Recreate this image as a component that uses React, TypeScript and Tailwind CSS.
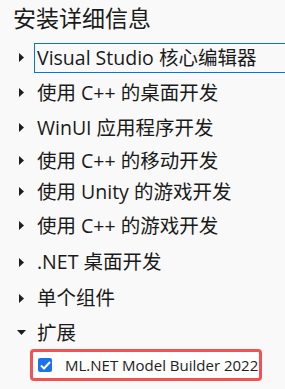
const font = { fontFamily: '"Open Sans", "Noto Sans CJK SC", sans-serif' }

function Caret({ open = false }: { open?: boolean }) {
  return (
    <div className="w-[17px] flex justify-center shrink-0">
      {open ? (
        <svg width="9" height="5" viewBox="0 0 9 5">
          <path d="M0 0 L9 0 L4.5 5 Z" fill="#1e1e1e" />
        </svg>
      ) : (
        <svg width="5" height="9" viewBox="0 0 5 9">
          <path d="M0 0 L5 4.5 L0 9 Z" fill="#1e1e1e" />
        </svg>
      )}
    </div>
  )
}

const rows = [
  { label: "使用 C++ 的桌面开发", h: "h-[35px]" },
  { label: "WinUI 应用程序开发", h: "h-[35px]" },
  { label: "使用 C++ 的移动开发", h: "h-[31px]" },
  { label: "使用 Unity 的游戏开发", h: "h-[31px]" },
  { label: "使用 C++ 的游戏开发", h: "h-[37px]" },
  { label: ".NET 桌面开发", h: "h-[36px]" },
  { label: "单个组件", h: "h-[36px]" },
]

export default function App() {
  return (
    <div className="w-[285px] h-[389px] bg-[#f9f9f9] text-[#1a1a1a] overflow-hidden" style={font}>
      <div className="pl-[13px] pt-[2px] h-[40px] text-[23px] leading-[32px]">安装详细信息</div>

      <div className="pl-[13px] flex flex-col">
        {/* focused row */}
        <div className="flex items-center h-[35px]">
          <Caret />
          <div className="ml-[4px] -mr-[40px] flex-1 h-[30px] border border-[#0078d4] flex items-center pl-[2px] text-[19.5px] whitespace-nowrap">
            Visual Studio 核心编辑器
          </div>
        </div>

        {rows.map((r) => (
          <div key={r.label} className={`flex items-center ${r.h}`}>
            <Caret />
            <div className="ml-[7px] text-[19.5px] whitespace-nowrap">{r.label}</div>
          </div>
        ))}

        <div className="flex items-center h-[33px]">
          <Caret open />
          <div className="ml-[7px] text-[19.5px] whitespace-nowrap">扩展</div>
        </div>
      </div>

      {/* extension item */}
      <div className="ml-[30px] w-[232px] h-[32px] border-[3px] border-[#f25252] rounded-[4px] bg-white flex items-center pl-[5px]">
        <div className="w-[14px] h-[14px] rounded-[2px] bg-[#1a73e8] flex items-center justify-center">
          <svg width="11" height="9" viewBox="0 0 11 9">
            <path d="M1 4.5 L4 7.5 L10 1" stroke="white" strokeWidth="2" fill="none" />
          </svg>
        </div>
        <div className="ml-[13px] text-[15px] whitespace-nowrap text-[#222]">ML.NET Model Builder 2022</div>
      </div>
    </div>
  )
}
